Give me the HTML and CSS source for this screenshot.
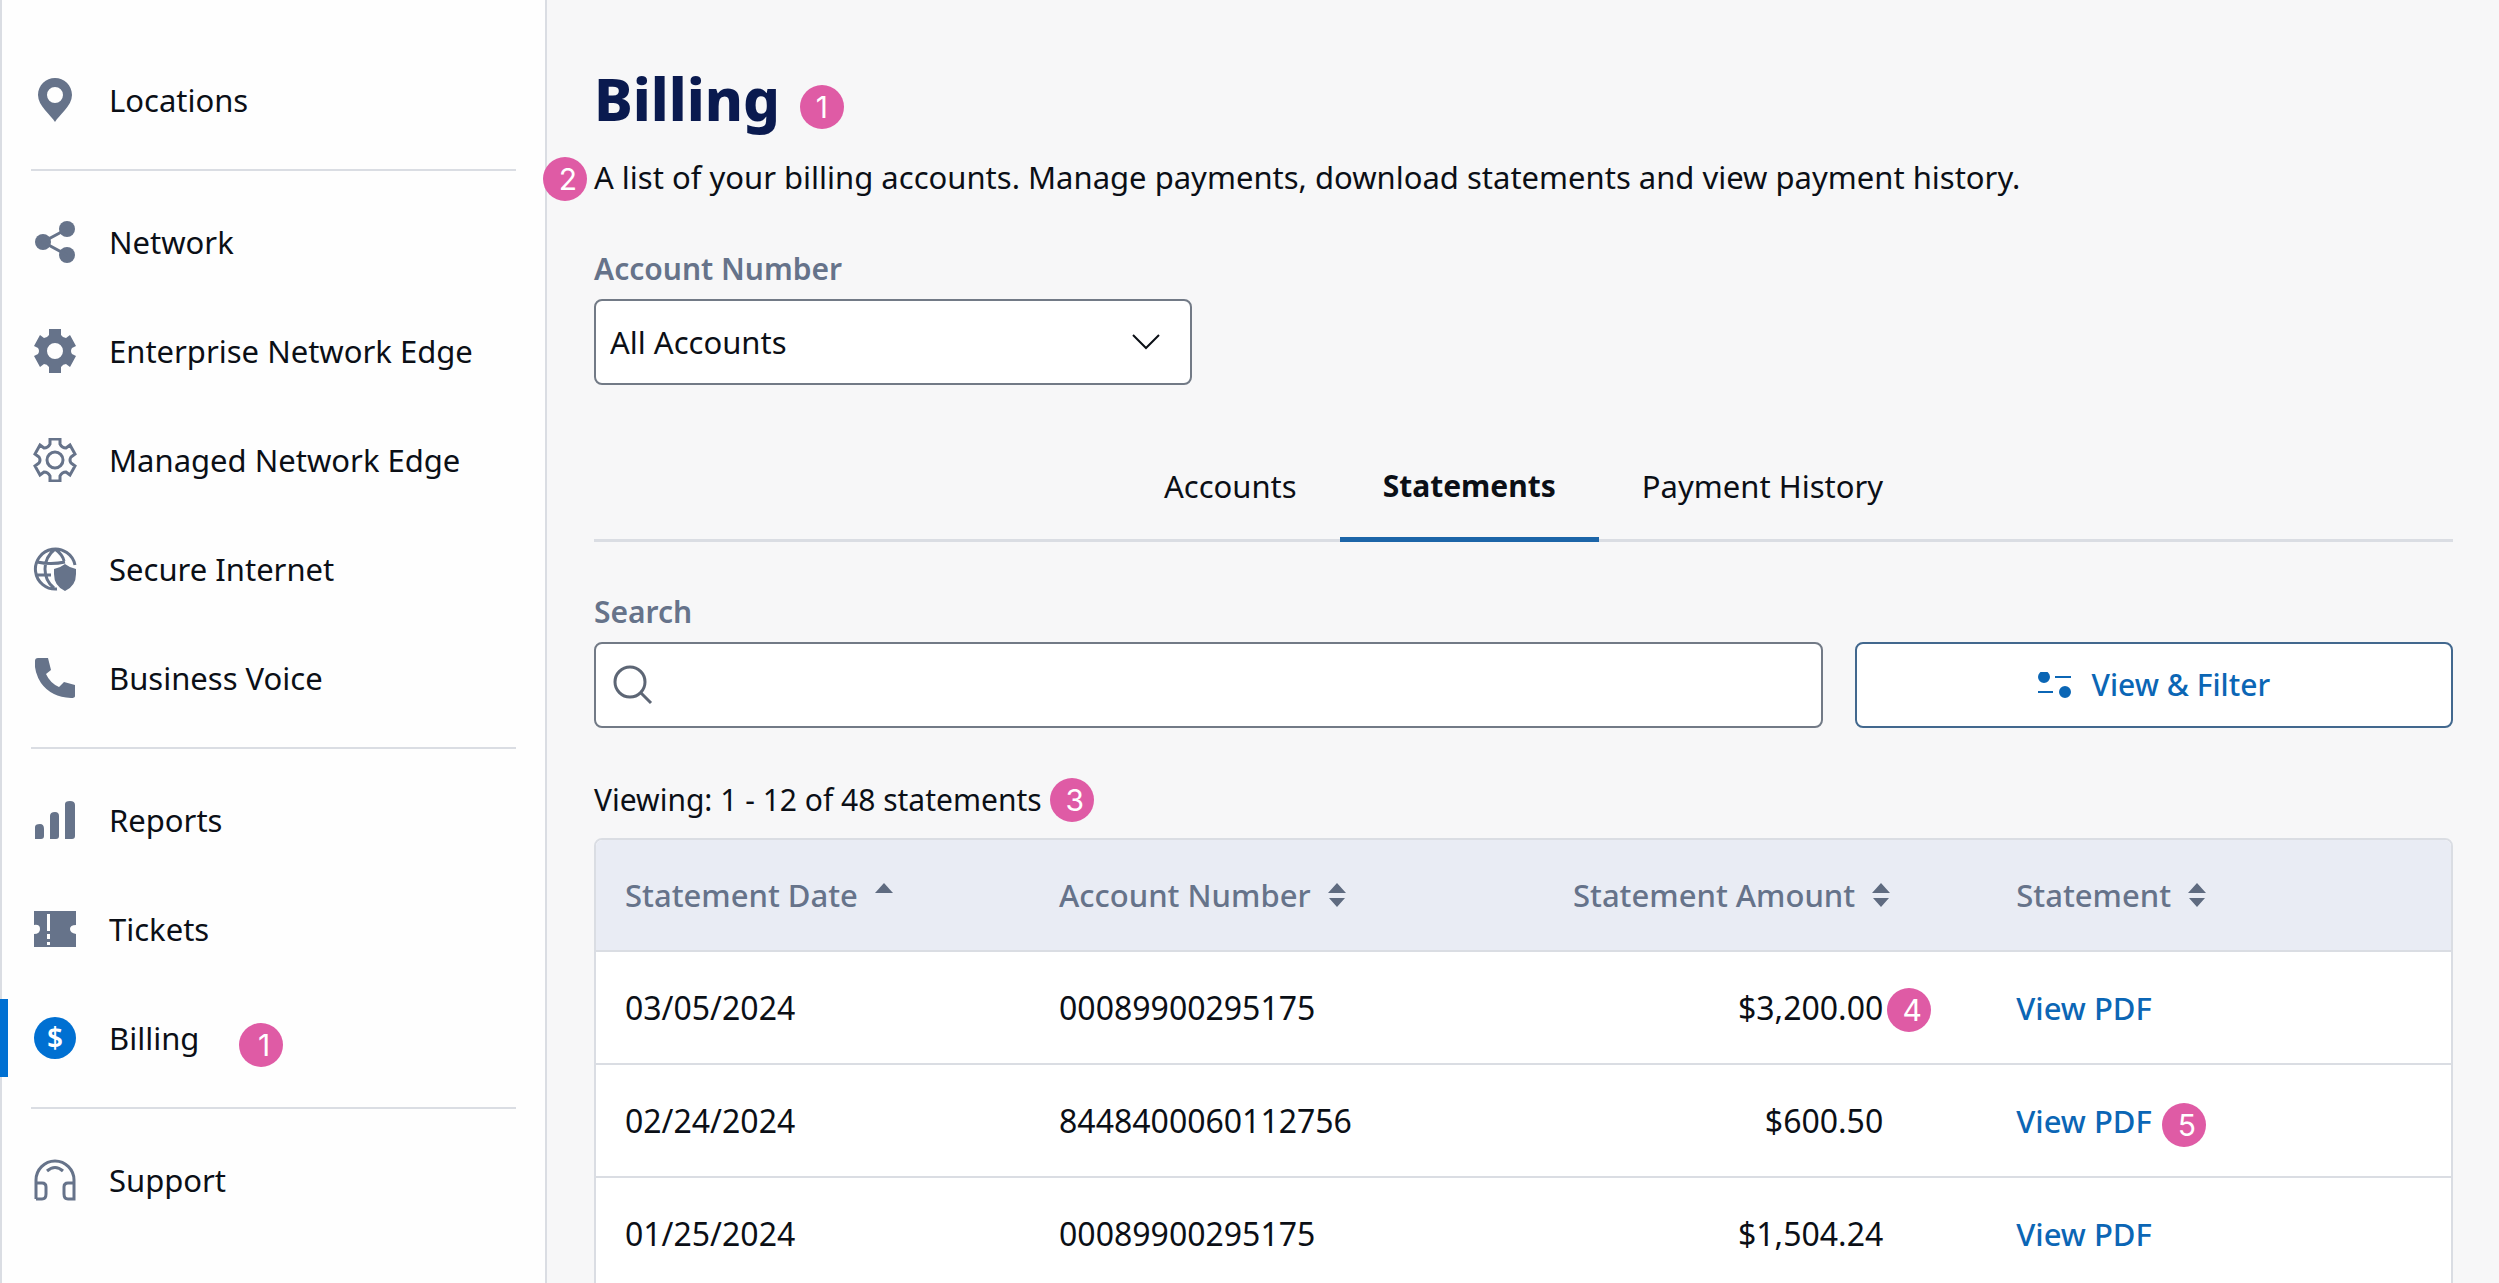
FILE: index.html
```html
<!DOCTYPE html>
<html lang="en">
<head>
  <meta charset="UTF-8" />
  <meta name="viewport" content="width=device-width, initial-scale=1.0"/>
  <title>Billing</title>
  <link rel="stylesheet" href="styles.css">
</head>
<body>

<div class="app">
  <nav class="sidebar">
    <div class="nav-group">
      <a class="nav-item" href="#locations">
        <svg class="icon" viewBox="-22 -22 44 44"><path fill-rule="evenodd" d="M0 22C-4 15-17 6-17-5C-17-15-9-22 0-22S17-15 17-5C17 6 4 15 0 22ZM0-13A8 8 0 1 0 0 3A8 8 0 1 0 0-13Z"/></svg>
        <span>Locations</span>
      </a>
    </div>
    <div class="nav-group">
      <a class="nav-item" href="#network">
        <svg class="icon" viewBox="-22 -22 44 44"><circle cx="-12" cy="0" r="8"/><circle cx="12" cy="-13" r="8"/><circle cx="12" cy="13" r="8"/><path class="line" d="M12-13L-12 0L12 13"/></svg>
        <span>Network</span>
      </a>
      <a class="nav-item" href="#enterprise">
        <svg class="icon" viewBox="-22 -22 44 44"><path fill-rule="evenodd" d="M-6-22H6V-16Q8-13 11-13L15-16L21-5L17-3Q15 0 17 3L21 5L15 16L11 13Q8 13 6 16V22H-6V16Q-8 13-11 13L-15 16L-21 5L-17 3Q-15 0-17-3L-21-5L-15-16L-11-13Q-8-13-6-16ZM0-8A8 8 0 1 0 0 8A8 8 0 1 0 0-8Z"/></svg>
        <span>Enterprise Network Edge</span>
      </a>
      <a class="nav-item" href="#managed">
        <svg class="icon" viewBox="-22 -22 44 44"><path class="line" d="M-5-21H5V-16Q7-12 11-12L15-15L20-6L16-3Q14 0 16 3L20 6L15 15L11 12Q7 12 5 16V21H-5V16Q-7 12-11 12L-15 15L-20 6L-16 3Q-14 0-16-3L-20-6L-15-15L-11-12Q-7-12-5-16Z"/><circle class="line" r="8"/></svg>
        <span>Managed Network Edge</span>
      </a>
      <a class="nav-item" href="#secure">
        <svg class="icon" viewBox="-22 -22 44 44"><path class="line" d="M20-4A20 20 0 1 0 2 20M-18-7Q-4-4 10-7M-19 6H-4M0-20Q-10-12-10 0T-1 19M0-20Q8-14 9-8"/><path d="M10-5Q15-1 21 0V5Q21 17 10 22Q-1 17-1 5V0Q5-1 10-5Z"/></svg>
        <span>Secure Internet</span>
      </a>
      <a class="nav-item" href="#voice">
        <svg class="icon" viewBox="-22 -22 44 44"><path d="M-17-20H-7L-4-8L-9-4Q-5 5 4 9L9 4L20 7V18Q20 20 16 20Q-4 19-14 5Q-21-6-20-17Q-20-20-17-20Z"/></svg>
        <span>Business Voice</span>
      </a>
    </div>
    <div class="nav-group">
      <a class="nav-item" href="#reports">
        <svg class="icon" viewBox="-22 -22 44 44"><path d="M-20 19V7Q-20 4-15 4Q-11 4-11 9V16Q-11 19-14 19ZM-5 19V-4Q-5-8 0-8Q4-8 4-4V16Q4 19 1 19ZM10 19V-16Q10-19 15-19Q20-19 20-15V16Q20 19 17 19Z"/></svg>
        <span>Reports</span>
      </a>
      <a class="nav-item" href="#tickets">
        <svg class="icon" viewBox="-22 -22 44 44"><path fill-rule="evenodd" d="M-21-18H21V-4Q15-4 15 0T21 5V18H-21V5Q-15 5-15 0T-21-4ZM-8-15V2H-5V-15ZM-8 5V10H-5V5ZM-8 13V16H-5V13Z"/></svg>
        <span>Tickets</span>
      </a>
      <a class="nav-item active" href="#billing" aria-current="page">
        <svg class="icon" viewBox="-22 -22 44 44"><circle r="21"/><text class="dollar" y="10" text-anchor="middle">$</text></svg>
        <span>Billing</span>
        <span class="badge shifted nav-badge">1</span>
      </a>
    </div>
    <div class="nav-group">
      <a class="nav-item" href="#support">
        <svg class="icon" viewBox="-22 -22 44 44"><path class="line" d="M-19 19V0A19 19 0 0 1 19 0V19H13Q9 19 9 14V7Q9 3 13 3H19M-19 3H-13Q-9 3-9 7V14Q-9 19-13 19H-19M-8-9Q0-16 8-9"/></svg>
        <span>Support</span>
      </a>
    </div>
  </nav>

  <main class="content">
    <div class="title-row">
      <h1>Billing</h1>
      <span class="badge title-badge">1</span>
    </div>
    <p class="intro"><span class="badge shifted intro-badge">2</span>A list of your billing accounts. Manage payments, download statements and view payment history.</p>

    <div class="form-row">
      <div class="field">
        <label for="account">Account Number</label>
        <div class="control">
          <select id="account">
            <option>All Accounts</option>
          </select>
          <svg class="chevron" viewBox="0 0 28 16"><path d="M1 1L14 14L27 1"/></svg>
        </div>
      </div>
    </div>

    <div class="tabs" role="tablist">
      <button class="tab" role="tab" aria-selected="false">Accounts</button>
      <button class="tab selected" role="tab" aria-selected="true">Statements</button>
      <button class="tab" role="tab" aria-selected="false">Payment History</button>
    </div>

    <div class="form-row">
      <div class="field wide">
        <label for="search">Search</label>
        <div class="control">
          <input type="search" id="search">
          <svg class="search-icon" viewBox="0 0 40 40"><circle cx="17" cy="17" r="15"/><path d="M28 28L38 38"/></svg>
        </div>
      </div>
      <button class="filter-btn">
        <svg class="filter-icon" viewBox="0 0 34 26"><circle cx="6" cy="5" r="5"/><path d="M17 5H33M0 20H15"/><circle cx="27" cy="20" r="5"/></svg>
        View &amp; Filter
      </button>
    </div>

    <div class="summary">
      Viewing: 1 - 12 of 48 statements
      <span class="badge shifted">3</span>
    </div>

    <div class="table-box">
      <table>
        <thead>
          <tr>
            <th class="col-date">Statement Date <svg class="sort" viewBox="0 0 18 24"><path d="M0 10L9 0L18 10Z"/></svg></th>
            <th class="col-account">Account Number <svg class="sort" viewBox="0 0 18 24"><path d="M0 10L9 0L18 10ZM1 15H17L9 24Z"/></svg></th>
            <th class="col-amount">Statement Amount <svg class="sort" viewBox="0 0 18 24"><path d="M0 10L9 0L18 10ZM1 15H17L9 24Z"/></svg></th>
            <th>Statement <svg class="sort" viewBox="0 0 18 24"><path d="M0 10L9 0L18 10ZM1 15H17L9 24Z"/></svg></th>
          </tr>
        </thead>
        <tbody>
          <tr>
            <td>03/05/2024</td>
            <td>00089900295175</td>
            <td class="amount"><span class="marked">$3,200.00<span class="badge shifted cell-badge">4</span></span></td>
            <td><a href="#pdf-1">View PDF</a></td>
          </tr>
          <tr>
            <td>02/24/2024</td>
            <td>8448400060112756</td>
            <td class="amount">$600.50</td>
            <td><span class="marked"><a href="#pdf-2">View PDF</a><span class="badge shifted cell-badge link-badge">5</span></span></td>
          </tr>
          <tr>
            <td>01/25/2024</td>
            <td>00089900295175</td>
            <td class="amount">$1,504.24</td>
            <td><a href="#pdf-3">View PDF</a></td>
          </tr>
        </tbody>
      </table>
    </div>
  </main>
</div>

</body>
</html>
```
FILE: styles.css
```css
:root {
  --bg: #f7f7f8;
  --text: #0b0f16;
  --muted: #66738a;
  --border: #dadde3;
  --blue: #0070d2;
  --link: #0b66b5;
  --pink: #df5ba5;
}

* { box-sizing: border-box; }

body {
  margin: 0;
  font-family: "Noto Sans", sans-serif;
  font-size: 31px;
  line-height: 44px;
  color: var(--text);
  background: var(--bg);
}

button, input, select {
  font: inherit;
  color: inherit;
}

.app {
  display: flex;
  height: 100vh;
  overflow: hidden;
}

/* sidebar */
.sidebar {
  flex: 0 0 547px;
  padding-top: 45px;
  background: #fefefe;
  border-left: 2px solid var(--border);
  border-right: 2px solid var(--border);
}

.nav-group + .nav-group::before {
  content: "";
  display: block;
  height: 2px;
  margin: 15px 29px 16px;
  background: var(--border);
}

.nav-item {
  position: relative;
  display: flex;
  align-items: center;
  gap: 32px;
  height: 109px;
  padding-left: 31px;
  color: var(--text);
  text-decoration: none;
}

.nav-item.active::before {
  content: "";
  position: absolute;
  left: -2px;
  width: 8px;
  height: 78px;
  background: var(--blue);
}

.icon {
  width: 44px;
  height: 44px;
  fill: var(--muted);
}

.active .icon { fill: var(--blue); }

.icon .line {
  fill: none;
  stroke: var(--muted);
  stroke-width: 3;
}

.icon .dollar {
  font-size: 28px;
  font-weight: 600;
  fill: #fff;
}

.badge {
  display: inline-block;
  flex: none;
  width: 44px;
  height: 44px;
  border-radius: 50%;
  background: var(--pink);
  color: #fff;
  font-family: Inter, sans-serif;
  font-size: 30px;
  font-weight: 400;
  line-height: 44px;
  text-align: center;
}

.badge.shifted { padding-left: 6px; }

.nav-badge {
  position: absolute;
  left: 237px;
  top: 40px;
}

/* main column */
.content {
  flex: 1;
  min-width: 0;
  padding: 51px 46px 0 47px;
}

.title-row {
  display: flex;
  align-items: center;
  gap: 20px;
}

.title-badge { margin-top: 16px; }

h1 {
  margin: 0;
  font-size: 58px;
  font-weight: 800;
  line-height: 96px;
  color: #0a1a4f;
}

.intro {
  position: relative;
  margin: 8px 0 48px;
}

.intro-badge {
  position: absolute;
  left: -51px;
  top: 2px;
}

.form-row {
  display: grid;
  grid-template-columns: repeat(3, 1fr);
  gap: 32px;
  align-items: end;
}

.wide { grid-column: span 2; }

.field label {
  display: block;
  margin-bottom: 8px;
  font-size: 30px;
  font-weight: 600;
  color: var(--muted);
}

.control { position: relative; }

.control select, .control input, .filter-btn {
  display: block;
  width: 100%;
  height: 86px;
  margin: 0;
  background: #fff;
  border: 2px solid #727a86;
  border-radius: 8px;
}

.control select {
  appearance: none;
  padding: 0 70px 0 14px;
}

.control input {
  appearance: none;
  padding: 0 20px 0 72px;
}

.chevron {
  position: absolute;
  right: 32px;
  top: 35px;
  width: 28px;
  height: 16px;
  fill: none;
  stroke: var(--text);
  stroke-width: 2;
  pointer-events: none;
}

.search-icon {
  position: absolute;
  left: 19px;
  top: 23px;
  width: 40px;
  height: 40px;
  fill: none;
  stroke: #5d6675;
  stroke-width: 3;
}

.control select, .filter-btn { cursor: pointer; }

.filter-btn {
  display: flex;
  align-items: center;
  justify-content: center;
  gap: 20px;
  border-color: #42688e;
  color: var(--link);
  font-size: 30px;
  font-weight: 500;
}

.filter-icon {
  width: 34px;
  height: 26px;
  fill: var(--link);
  stroke: var(--link);
  stroke-width: 2;
}

.tabs {
  display: flex;
  justify-content: center;
  margin: 69px 0 48px;
  box-shadow: inset 0 -3px var(--border);
}

.tab {
  padding: 10px 43px 29px;
  border: 0;
  border-bottom: 5px solid transparent;
  background: none;
}

.tab.selected {
  border-color: #1c65a8;
  font-size: 30px;
  font-weight: 700;
}

.summary {
  display: flex;
  align-items: center;
  gap: 8px;
  margin: 50px 0 16px;
  font-size: 30px;
}

.table-box {
  border: 2px solid var(--border);
  border-radius: 8px;
  background: #fff;
  overflow: hidden;
}

table {
  width: 100%;
  border-collapse: collapse;
  table-layout: fixed;
}

th, td {
  height: 113px;
  padding: 0 29px;
  text-align: left;
  border-bottom: 2px solid var(--border);
}

td { font-size: 32px; }

th {
  height: 111px;
  background: #e9ecf4;
  color: var(--muted);
  font-weight: 500;
}

.col-date, .col-account { width: 23.4%; }

.col-amount {
  width: 28.2%;
  padding-right: 97px;
  text-align: right;
}

td.amount {
  padding-right: 104px;
  text-align: right;
}

td a {
  color: var(--link);
  font-size: 31px;
  font-weight: 500;
  text-decoration: none;
}

.sort {
  width: 18px;
  height: 24px;
  margin-left: 9px;
  fill: #5f6b80;
}

.marked {
  position: relative;
  display: inline-block;
}

.cell-badge {
  position: absolute;
  left: 100%;
  top: 2px;
  margin-left: 4px;
}

.link-badge {
  top: 4px;
  margin-left: 10px;
}
```
